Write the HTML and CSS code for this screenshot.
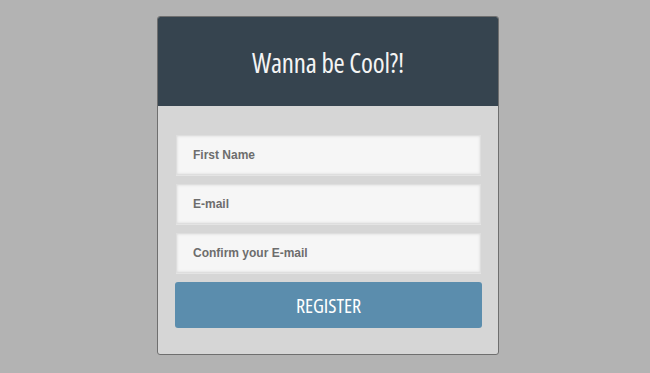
FILE: index.html
```html
<!DOCTYPE html>
<html lang="en">
<head>
  <meta charset="UTF-8">
  <meta name="viewport" content="width=device-width, initial-scale=1.0">
  <title>Wanna be Cool?!</title>
  <link rel="stylesheet" href="styles.css">
</head>
<body>
  <div class="card">
    <div class="card-head">
      <h1>Wanna be Cool?!</h1>
    </div>
    <form class="card-body" onsubmit="return false">
      <input type="text" placeholder="First Name">
      <input type="email" placeholder="E-mail">
      <input type="email" placeholder="Confirm your E-mail">
      <button type="submit">REGISTER</button>
    </form>
  </div>
</body>
</html>
```

FILE: styles.css
```css
:root {
  --bg-color: #b3b3b3;
  --head-bg: #36444f;
  --card-bg: #d6d6d6;
  --input-bg: #f6f6f6;
  --accent-color: #5b8dad;
  --text-color: #6d6d6d;
}

* {
  box-sizing: border-box;
  margin: 0;
  padding: 0;
}

body {
  background: var(--bg-color);
  font-family: 'Liberation Sans', Arial, sans-serif;
  padding-top: 16px;
}

.card {
  width: 342px;
  margin-left: 157px;
  border: 1px solid #6f6f6f;
  border-radius: 3px;
  overflow: hidden;
  background: var(--card-bg);
}

.card-head {
  background: var(--head-bg);
  height: 89px;
  padding-top: 2px;
  display: flex;
  align-items: center;
  justify-content: center;
}

.card-head h1 {
  color: #f4f4f4;
  font-family: 'Open Sans', sans-serif;
  font-stretch: 75%;
  font-weight: 400;
  font-size: 27px;
  letter-spacing: -0.2px;
}

.card-body {
  display: flex;
  flex-direction: column;
  padding: 29px 17px 26px 18px;
}

input {
  height: 40px;
  margin-bottom: 9px;
  padding: 0 16px;
  background: var(--input-bg);
  border: 1px solid #dedede;
  box-shadow: inset 0 0 3px rgba(0, 0, 0, 0.12), 0 1px 0 #e4e4e4;
  font-family: inherit;
  font-size: 12px;
  font-weight: bold;
  color: var(--text-color);
  outline: none;
}

input::placeholder {
  color: var(--text-color);
  opacity: 1;
}

button {
  height: 46px;
  margin-left: -1px;
  margin-right: -1px;
  border: none;
  border-radius: 3px;
  background: var(--accent-color);
  color: #ffffff;
  font-family: 'Open Sans', sans-serif;
  font-stretch: 75%;
  font-weight: 400;
  font-size: 20px;
  cursor: pointer;
}
```
